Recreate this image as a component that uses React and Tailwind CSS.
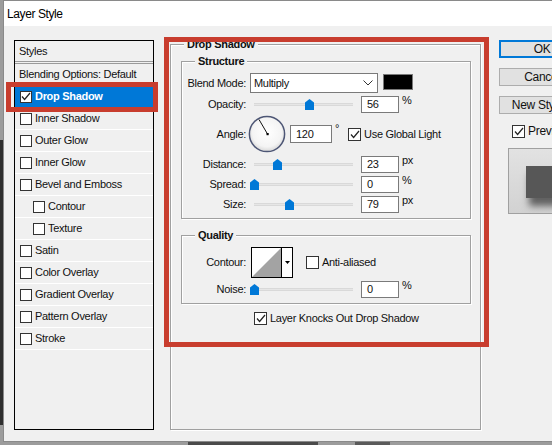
import React from "react";

const font = { fontFamily: '"Liberation Sans", Arial, sans-serif' };

const styleItems = [
  { label: "Inner Shadow" },
  { label: "Outer Glow" },
  { label: "Inner Glow" },
  { label: "Bevel and Emboss" },
  { label: "Contour", indent: true },
  { label: "Texture", indent: true },
  { label: "Satin" },
  { label: "Color Overlay" },
  { label: "Gradient Overlay" },
  { label: "Pattern Overlay" },
  { label: "Stroke" },
];

function Checkbox({ checked, small }) {
  return (
    <div
      className={`${small ? "w-[12px] h-[12px]" : "w-[13px] h-[13px]"} shrink-0 border border-[#333] bg-white flex items-center justify-center`}
    >
      {checked && (
        <svg width="10" height="9" viewBox="0 0 10 9">
          <polyline points="1,4.5 3.6,7.5 9,1" fill="none" stroke="#222" strokeWidth="1.2" />
        </svg>
      )}
    </div>
  );
}

function Slider({ thumb }) {
  return (
    <div className="relative w-[99px] h-[3px] ml-[8px] bg-[#e6e6e6] border-y border-[#d9d9d9]">
      <svg
        className="absolute top-[-5px]"
        style={{ left: thumb }}
        width="9"
        height="11"
        viewBox="0 0 9 11"
      >
        <polygon points="0,3.5 4.5,0 9,3.5 9,11 0,11" fill="#0078d7" />
      </svg>
    </div>
  );
}

function Field({ value, w = "w-[38px]", h = "h-[17px]" }) {
  return (
    <div className={`${w} ${h} bg-white border border-[#7a7a7a] pl-[5px] flex items-center text-[11px]`}>
      {value}
    </div>
  );
}

function SliderRow({ label, thumb, value, unit }) {
  return (
    <div className="flex items-center h-[20px]">
      <div className="w-[64px] text-right">{label}</div>
      <Slider thumb={thumb} />
      <div className="ml-[8px]">
        <Field value={value} />
      </div>
      <div className="ml-[3px] self-start leading-[13px]">{unit}</div>
    </div>
  );
}

function Group({ title, className, children }) {
  return (
    <div
      className={`relative border border-[#a0a0a0] shadow-[inset_1px_1px_0_#fff,1px_1px_0_#fff] ${className}`}
    >
      <span className="absolute left-[13px] top-[-8px] px-[3px] bg-[#f0f0f0] font-bold leading-[14px]">
        {title}
      </span>
      {children}
    </div>
  );
}

function Dial() {
  return (
    <svg width="38" height="38" viewBox="0 0 38 38">
      <defs>
        <radialGradient id="dialFill" cx="50%" cy="45%" r="55%">
          <stop offset="0%" stopColor="#ffffff" />
          <stop offset="75%" stopColor="#f4f4f4" />
          <stop offset="100%" stopColor="#d8d8d8" />
        </radialGradient>
      </defs>
      <circle cx="19" cy="19" r="17.6" fill="url(#dialFill)" stroke="#4d5675" strokeWidth="1.5" />
      <line x1="19.5" y1="19" x2="11" y2="4.5" stroke="#111" strokeWidth="1" />
      <rect x="18.5" y="18" width="2.2" height="2.2" fill="#000" />
    </svg>
  );
}

function Button({ children, primary, className = "" }) {
  return (
    <div
      className={`w-[86px] h-[18px] flex items-center justify-center bg-[#e1e1e1] text-[12px] ${
        primary ? "border-2 border-[#0078d7]" : "border border-[#adadad]"
      } ${className}`}
    >
      {children}
    </div>
  );
}

export default function App() {
  return (
    <div
      className="relative w-[552px] h-[445px] overflow-hidden bg-[#9c9c9c] text-[11px] tracking-[-0.3px] text-[#111]"
      style={font}
    >
      {/* desktop behind the dialog */}
      <div className="absolute left-0 top-[140px] w-[3px] h-[285px] bg-[#2e2e2e]" />
      <div className="absolute left-[188px] top-[442px] w-[130px] h-[3px] bg-[#4a4a4a]" />
      <div className="absolute left-[355px] top-[442px] w-[35px] h-[3px] bg-[#5a5a5a]" />

      {/* dialog window */}
      <div className="absolute left-[3px] top-0 w-[620px] h-[442px] bg-[#f0f0f0] border-l border-t border-b border-[#8a8a8a] flex flex-col">
        <div className="h-[25px] bg-white flex items-center pl-[3px] text-[12px] tracking-[-0.4px] text-black">
          Layer Style
        </div>

        <div className="flex pt-[14px]">
          {/* styles list */}
          <div className="ml-[10px] w-[140px] h-[390px] border border-black flex flex-col">
            <div className="h-[23px] pl-[4px] flex items-center border-b-[3px] border-double border-[#9a9a9a]">
              Styles
            </div>
            <div className="h-[22px] pl-[4px] flex items-center border-b border-white">
              Blending Options: Default
            </div>
            <div className="h-[22px] pl-[5px] flex items-center border-b border-white bg-[#0078d7] text-white font-bold">
              <Checkbox checked small />
              <span className="ml-[3px]">Drop Shadow</span>
            </div>
            {styleItems.map((item) => (
              <div
                key={item.label}
                className={`h-[22px] flex items-center border-b border-white ${
                  item.indent ? "pl-[18px]" : "pl-[5px]"
                }`}
              >
                <Checkbox small />
                <span className="ml-[3px]">{item.label}</span>
              </div>
            ))}
          </div>

          {/* drop shadow panel */}
          <Group title="Drop Shadow" className="ml-[16px] mt-[4px] w-[311px] h-[386px] pl-[10px] pt-[16px]">
            <Group title="Structure" className="w-[290px] pt-[11px] pb-[4px]">
              <div className="flex items-center h-[20px]">
                <div className="w-[64px] text-right">Blend Mode:</div>
                <div className="ml-[4px] w-[128px] h-[20px] bg-white border border-[#7a7a7a] pl-[3px] pr-[4px] flex items-center justify-between">
                  <span>Multiply</span>
                  <svg width="10" height="6" viewBox="0 0 10 6">
                    <polyline points="0.5,0.5 5,5 9.5,0.5" fill="none" stroke="#333" strokeWidth="1" />
                  </svg>
                </div>
                <div className="ml-[5px] w-[30px] h-[16px] bg-black border border-[#7a7a7a] self-start mt-[1px]" />
              </div>
              <div className="mt-[1px]">
                <SliderRow label="Opacity:" thumb={51} value="56" unit="%" />
              </div>
              <div className="flex items-center h-[40px]">
                <div className="w-[64px] text-right">Angle:</div>
                <div className="ml-[2px]">
                  <Dial />
                </div>
                <div className="ml-[4px]">
                  <Field value="120" w="w-[42px]" h="h-[18px]" />
                </div>
                <div className="ml-[3px] self-start mt-[9px] leading-[10px]">°</div>
                <div className="ml-[9px]">
                  <Checkbox checked />
                </div>
                <span className="ml-[3px]">Use Global Light</span>
              </div>
              <SliderRow label="Distance:" thumb={19} value="23" unit="px" />
              <SliderRow label="Spread:" thumb={-4} value="0" unit="%" />
              <SliderRow label="Size:" thumb={31} value="79" unit="px" />
            </Group>

            <Group title="Quality" className="w-[290px] mt-[16px] pt-[11px] pb-[4px]">
              <div className="flex items-center h-[31px]">
                <div className="w-[64px] text-right">Contour:</div>
                <div className="ml-[5px] w-[42px] h-[31px] border border-black bg-white flex">
                  <svg width="29" height="29" viewBox="0 0 29 29">
                    <polygon points="0,29 29,0 29,29" fill="#a3a3a3" />
                  </svg>
                  <div className="flex-1 border-l border-black flex items-center justify-center">
                    <svg width="5" height="3" viewBox="0 0 5 3">
                      <polygon points="0,0 5,0 2.5,3" fill="#000" />
                    </svg>
                  </div>
                </div>
                <div className="ml-[13px]">
                  <Checkbox />
                </div>
                <span className="ml-[3px]">Anti-aliased</span>
              </div>
              <div className="mt-[1px]">
                <SliderRow label="Noise:" thumb={-4} value="0" unit="%" />
              </div>
            </Group>

            <div className="mt-[4px] h-[20px] pl-[73px] flex items-center">
              <Checkbox checked />
              <span className="ml-[3px]">Layer Knocks Out Drop Shadow</span>
            </div>
          </Group>

          {/* buttons */}
          <div className="ml-[18px] flex flex-col">
            <Button primary>OK</Button>
            <Button className="mt-[10px]">Cancel</Button>
            <Button className="mt-[10px]">New Style...</Button>
            <div className="mt-[8px] ml-[13px] flex items-center text-[12px]">
              <Checkbox checked />
              <span className="ml-[3px]">Preview</span>
            </div>
            <div className="mt-[8px] ml-[9px] w-[80px] h-[66px] border border-[#a0a0a0] bg-gradient-to-b from-[#e2e2e2] to-[#d2d2d2] pt-[17px] pl-[17px]">
              <div className="w-[36px] h-[32px] bg-[#575757] shadow-[3px_8px_7px_rgba(0,0,0,0.55)]" />
            </div>
          </div>
        </div>
      </div>

      {/* red highlight annotations */}
      <div className="absolute left-[6px] top-[82px] w-[152px] h-[30px] border-[5px] border-[#c83d2e]" />
      <div className="absolute left-[164px] top-[37px] w-[325px] h-[310px] border-[5px] border-[#c83d2e]" />
    </div>
  );
}
